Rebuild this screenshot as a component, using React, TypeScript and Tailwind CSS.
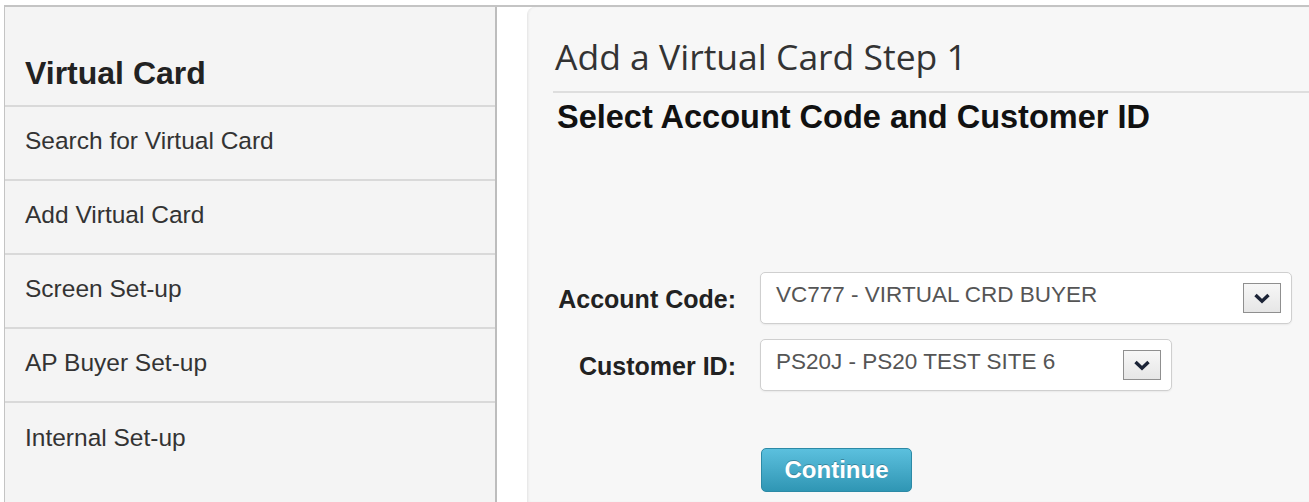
import React from "react";

const menuItems = [
  "Search for Virtual Card",
  "Add Virtual Card",
  "Screen Set-up",
  "AP Buyer Set-up",
  "Internal Set-up",
];

function Chevron() {
  return (
    <svg width="18" height="11" viewBox="0 0 18 11" aria-hidden="true">
      <path
        d="M2.5 2 L9 8.2 L15.5 2"
        fill="none"
        stroke="#1c2437"
        strokeWidth="3.4"
        strokeLinecap="butt"
        strokeLinejoin="miter"
      />
    </svg>
  );
}

function SelectBox({ value, width }: { value: string; width: string }) {
  return (
    <div
      className={`${width} flex h-[52px] items-center justify-between rounded-[5px] border border-[#cfcfcf] bg-white pl-[15px] pr-[10px] shadow-[0_1px_2px_rgba(0,0,0,0.06)]`}
    >
      <span className="pb-[5px] text-[22.5px] leading-none text-[#555]">{value}</span>
      <span className="flex h-[30px] w-[38px] items-center justify-center border-[1.5px] border-[#8f8f8f] bg-gradient-to-b from-[#f7f7f7] to-[#e6e6e6]">
        <Chevron />
      </span>
    </div>
  );
}

export default function App() {
  return (
    <div className="h-[502px] w-[1309px] overflow-hidden bg-white pl-[4px] pt-[5px] font-['Liberation_Sans',Arial,sans-serif]">
      <div className="flex h-full border-l border-t-2 border-[#c4c4c4]">
        {/* side menu */}
        <aside className="w-[492px] shrink-0 border-r-2 border-[#bdbdbd] bg-[#f4f4f4]">
          <div className="h-[100px] border-b-2 border-[#d9d9d9] pl-[20px] pt-[50px]">
            <h2 className="text-[32px] font-bold leading-none text-[#222]">Virtual Card</h2>
          </div>
          <ul>
            {menuItems.map((item, i) => (
              <li
                key={item}
                className={`flex h-[74px] items-center pb-[4px] pl-[20px] text-[24.5px] text-[#333] ${
                  i < menuItems.length - 1 ? "border-b-2 border-[#d9d9d9]" : ""
                }`}
              >
                {item}
              </li>
            ))}
          </ul>
        </aside>

        {/* gap */}
        <div className="w-[30px] shrink-0 bg-white" />

        {/* main panel */}
        <main className="flex-1 rounded-tl-[8px] border-l border-[#e9e9e9] bg-[#f7f7f7] pl-[25px] pt-[32px] shadow-[inset_1px_0_2px_rgba(0,0,0,0.04)]">
          <h1 className="ml-[2px] font-['Open_Sans',sans-serif] text-[35.5px] font-normal leading-none text-[#333]">
            Add a Virtual Card Step 1
          </h1>
          <div className="mt-[16px] h-[2px] bg-[#dedede]" />
          <h3 className="mt-[8px] pl-[4px] text-[32.5px] font-bold leading-none text-[#111]">
            Select Account Code and Customer ID
          </h3>

          <div className="mt-[139px] grid grid-cols-[183px_1fr] gap-x-[24px] gap-y-[15px]">
            <label className="flex items-center justify-end pt-[4px] text-[25px] font-bold text-[#222]">
              Account Code:
            </label>
            <SelectBox value="VC777 - VIRTUAL CRD BUYER" width="w-[532px]" />
            <label className="flex items-center justify-end pt-[3px] text-[25px] font-bold text-[#222]">
              Customer ID:
            </label>
            <SelectBox value="PS20J - PS20 TEST SITE 6" width="w-[412px]" />
            <div />
            <div className="pt-[42px]">
              <button className="ml-[1px] h-[44px] w-[151px] rounded-[5px] border border-[#2c8aa6] bg-gradient-to-b from-[#5bc0de] to-[#2f96b4] text-[24px] font-bold text-white [text-shadow:0_-1px_0_rgba(0,0,0,0.25)]">
                Continue
              </button>
            </div>
          </div>
        </main>
      </div>
    </div>
  );
}
